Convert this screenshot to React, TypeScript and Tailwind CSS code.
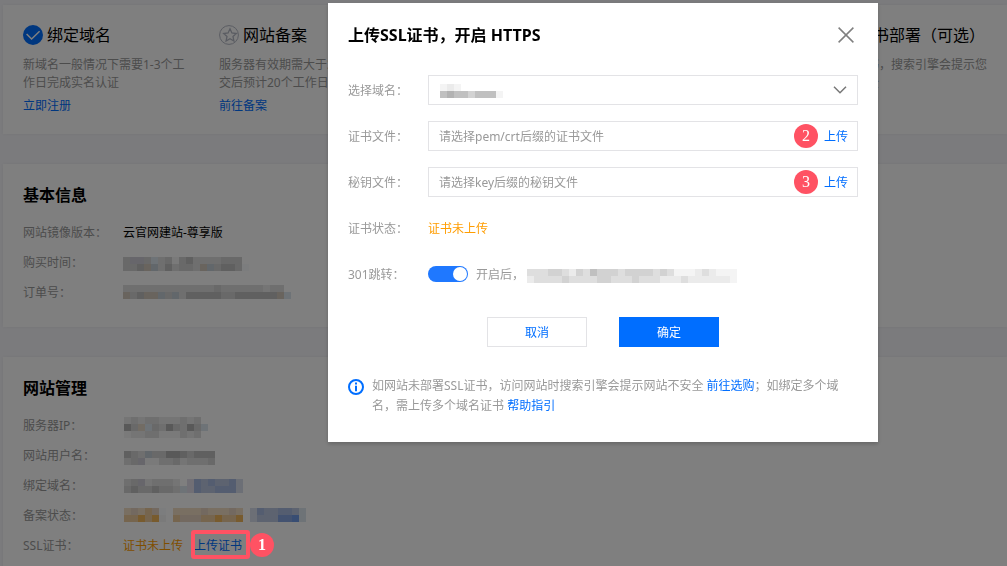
import type { ReactNode } from "react";

const PALETTE: Record<string, string> = {
  z: "#f9fbfc",
  a: "#f4f4f4",
  b: "#ebebeb",
  c: "#dedede",
  d: "#d2d2d2",
  e: "#c0c0c0",
  f: "#b2b2b2",
  t: "#d2c8bc",
  T: "#e4d8c8",
  s: "#c4ced6",
  S: "#dde6ee",
  p: "#cfccd6",
  P: "#e2deea",
  o: "#f2deC4",
  O: "#ecca9c",
  Q: "#f0b65c",
  r: "#e6d2c0",
  u: "#bac6e0",
  U: "#a8bae0",
  V: "#86a4e0",
  w: "#d8deec",
  W: "#709ae6",
};

const CELL = 7;

/* Masked value: rows of square cells, one palette letter per cell. */
function Mosaic({ rows, top, height = 30 }: { rows: string[]; top: number; height?: number }) {
  const columns = Math.max(...rows.map((row) => row.length));
  return (
    <svg width={columns * CELL} height={height} shapeRendering="crispEdges" className="block shrink-0" aria-hidden="true">
      {rows.map((row, y) =>
        row.split("").map((key, x) =>
          PALETTE[key] ? (
            <rect key={`${x}-${y}`} x={x * CELL} y={top + y * CELL} width={CELL} height={CELL} fill={PALETTE[key]} />
          ) : null,
        ),
      )}
    </svg>
  );
}

function Badge({ children }: { children: ReactNode }) {
  return (
    <span className="flex size-6 shrink-0 items-center justify-center rounded-full bg-[#ff5263] font-['Liberation_Serif',serif] text-base leading-6 text-white">
      {children}
    </span>
  );
}

function DoneIcon() {
  return (
    <svg width="20" height="20" viewBox="0 0 20 20" className="shrink-0" aria-hidden="true">
      <circle cx="10" cy="10" r="10" fill="#006eff" />
      <path d="M3.6 9 8.6 14 16.6 6.2" fill="none" stroke="#fff" strokeWidth="1.5" />
    </svg>
  );
}

function StarIcon() {
  return (
    <svg width="20" height="20" viewBox="0 0 20 20" className="shrink-0" fill="none" stroke="#b4b8c4" aria-hidden="true">
      <circle cx="10" cy="10" r="9.4" strokeWidth="1" />
      <path
        d="M11 3.8 12.9 8 17.3 8.5 14 11.5 14.9 16 11 13.8 7.1 16 8 11.5 4.7 8.5 9.1 8Z"
        strokeWidth="1.3"
      />
    </svg>
  );
}

type Step = { title: string; text: string; link?: string; done?: boolean; wide?: boolean };

const STEPS: Step[] = [
  { title: "绑定域名", text: "新域名一般情况下需要1-3个工作日完成实名认证", link: "立即注册", done: true },
  { title: "网站备案", text: "服务器有效期需大于3个月，提交后预计20个工作日", link: "前往备案" },
  { title: "", text: "" },
  { title: "", text: "" },
  { title: "SSL证书部署（可选）", text: "如未部署证书，搜索引擎会提示您的网站不安全", wide: true },
];

function StepItem({ step }: { step: Step }) {
  return (
    <li className={step.wide ? "w-[180px] shrink-0" : "w-[168px] shrink-0"}>
      {step.title && (
        <>
          <h3 className="flex h-5 items-center gap-1 text-base leading-5 whitespace-nowrap">
            {step.done ? <DoneIcon /> : <StarIcon />}
            {step.title}
          </h3>
          <p className="mt-[11px] leading-[18px] text-[#999]">{step.text}</p>
          {step.link && (
            <a href="#" className="mt-1 block leading-5 text-[#006eff]">
              {step.link}
            </a>
          )}
        </>
      )}
    </li>
  );
}

function Card({ title, children }: { title: string; children: ReactNode }) {
  return (
    <section className="bg-white p-5 shadow-[0_0_4px_rgba(0,0,0,0.06)]">
      <h2 className="text-base leading-[22px] font-bold">{title}</h2>
      <dl className="mt-[11px]">{children}</dl>
    </section>
  );
}

function Info({ label, children }: { label: string; children: ReactNode }) {
  return (
    <div className="flex h-[30px] items-center pt-[2px]">
      <dt className="w-[100px] shrink-0 text-[#999]">{label}：</dt>
      <dd className="flex items-center">{children}</dd>
    </div>
  );
}

function Field({ label, htmlFor, children }: { label: string; htmlFor?: string; children: ReactNode }) {
  return (
    <div className="flex h-[30px] items-center">
      <label htmlFor={htmlFor} className="w-20 shrink-0 pt-[2px] text-[#999]">
        {label}：
      </label>
      {children}
    </div>
  );
}

function FileBox({ id, placeholder, step }: { id: string; placeholder: string; step: number }) {
  return (
    <div className="flex h-full flex-1 items-center gap-[6px] border border-[#e3e3e6] px-[9px]">
      <input
        id={id}
        type="text"
        readOnly
        placeholder={placeholder}
        className="h-full min-w-0 flex-1 bg-transparent pl-px outline-none placeholder:text-[#999]"
      />
      <Badge>{step}</Badge>
      <button type="button" className="pt-[2px] text-[#006eff]">
        上传
      </button>
    </div>
  );
}

function UploadDialog() {
  return (
    <div
      role="dialog"
      aria-modal="true"
      aria-labelledby="dialog-title"
      className="w-[550px] bg-white px-5 pt-5 pb-[26px] shadow-[0_2px_4px_rgba(0,0,0,0.2)]"
    >
      <header className="flex h-6 items-center justify-between">
        <h2 id="dialog-title" className="text-base leading-6 font-bold">
          上传SSL证书，开启 HTTPS
        </h2>
        <button type="button" aria-label="关闭" className="mr-1">
          <svg width="16" height="16" viewBox="0 0 16 16" fill="none" stroke="#808080" strokeWidth="1.5" className="block">
            <path d="M.6.6 15.4 15.4M15.4.6.6 15.4" />
          </svg>
        </button>
      </header>

      <form className="mt-7" onSubmit={(event) => event.preventDefault()}>
        <div className="flex flex-col gap-4">
          <Field label="选择域名" htmlFor="domain">
            <div className="relative h-full flex-1">
              <select id="domain" className="block h-full w-full appearance-none border border-[#e3e3e6] bg-white px-[10px] outline-none">
                <option value="" />
              </select>
              <span className="pointer-events-none absolute inset-y-0 left-3">
                <Mosaic rows={["aba", "efeedeeea"]} top={9} />
              </span>
              <svg
                width="14"
                height="8"
                viewBox="0 0 14 8"
                fill="none"
                stroke="#777"
                strokeWidth="1.5"
                className="pointer-events-none absolute top-[11px] right-[11px]"
                aria-hidden="true"
              >
                <path d="M1 .8 7 6.8 13 .8" />
              </svg>
            </div>
          </Field>
          <Field label="证书文件" htmlFor="cert-file">
            <FileBox id="cert-file" placeholder="请选择pem/crt后缀的证书文件" step={2} />
          </Field>
          <Field label="秘钥文件" htmlFor="key-file">
            <FileBox id="key-file" placeholder="请选择key后缀的秘钥文件" step={3} />
          </Field>
          <Field label="证书状态">
            <span className="pt-[2px] text-[#ff9d00]">证书未上传</span>
          </Field>
          <Field label="301跳转" htmlFor="redirect">
            <span className="relative block h-4 w-10 shrink-0">
              <input id="redirect" type="checkbox" defaultChecked className="peer block h-4 w-10 appearance-none rounded-full bg-[#c4c4c4] checked:bg-[#1f78ff]" />
              <span className="pointer-events-none absolute top-px left-px size-[14px] rounded-full bg-white peer-checked:left-[25px]" />
            </span>
            <span className="ml-2 pt-[2px] text-[#999]">开启后，</span>
            <span className="ml-[3px]">
              <Mosaic
                rows={["cccddcbdcedddcddddcdcaaabcbaaa", "bccccdccccddcccdcccbbbcbbbbbba"]}
                top={10}
              />
            </span>
          </Field>
        </div>

        <div className="mt-7 flex justify-center gap-8">
          <button type="button" className="h-[30px] w-[100px] border border-[#e3e3e6] pt-[2px] text-[#006eff]">
            取消
          </button>
          <button type="submit" className="h-[30px] w-[100px] bg-[#006eff] pt-[2px] text-white">
            确定
          </button>
        </div>
      </form>

      <div className="mt-[29px] flex gap-2">
        <svg width="16" height="16" viewBox="0 0 16 16" className="mt-[3px] shrink-0" fill="none" aria-hidden="true">
          <circle cx="8" cy="8" r="7" stroke="#006eff" strokeWidth="2" />
          <path d="M8 3.6V5.4M8 6.7V12.2" stroke="#006eff" strokeWidth="2" />
        </svg>
        <p className="flex-1 pr-3 leading-5 text-[#999]">
          如网站未部署SSL证书，访问网站时搜索引擎会提示网站不安全{" "}
          <a href="#" className="text-[#006eff]">
            前往选购
          </a>
          ；如绑定多个域名，需上传多个域名证书{" "}
          <a href="#" className="text-[#006eff]">
            帮助指引
          </a>
        </p>
      </div>
    </div>
  );
}

export default function App() {
  return (
    <div
      lang="zh-CN"
      className="h-screen overflow-hidden bg-[#f7f7fb] font-['Noto_Sans','Noto_Sans_CJK_SC',sans-serif] text-xs leading-5 text-black"
    >
      <main className="flex flex-col gap-[30px] pt-[5px] pl-[3px]">
        <section className="overflow-hidden bg-white p-5 shadow-[0_0_4px_rgba(0,0,0,0.06)]">
          <ol className="flex h-[89px] gap-7">
            {STEPS.map((step, index) => (
              <StepItem key={index} step={step} />
            ))}
          </ol>
        </section>

        <Card title="基本信息">
          <Info label="网站镜像版本">云官网建站-尊享版</Info>
          <Info label="购买时间">
            <Mosaic rows={["dppdScdadeccccddd", "ddetscecddctsdeedz"]} top={9} />
          </Info>
          <Info label="订单号">
            <Mosaic rows={["cccccccccccccdccccccbcc", "tdettsdsceeeeeddeeeeeetS"]} top={7} />
          </Info>
        </Card>

        <Card title="网站管理">
          <Info label="服务器IP">
            <span className="ml-px">
              <Mosaic rows={["bcbccbbbcbc", "fdTSdcfdcfdS", "abbccaaacbc"]} top={6} />
            </span>
          </Info>
          <Info label="网站用户名">
            <span className="ml-px">
              <Mosaic rows={["edcsddffedeee", "cdpaaccdbcccd"]} top={10} />
            </span>
          </Info>
          <Info label="绑定域名">
            <span className="ml-px">
              <Mosaic rows={["cdpbcccb PUuUuuUw", "deddeddcSPUuuUUUw"]} top={8} />
            </span>
          </Info>
          <Info label="备案状态">
            <span className="ml-px">
              <Mosaic rows={["oroOrz ooooroooro wUuuUUuS", "OOQOQa OrrrOOQOOQ wuuuVVWS"]} top={7} />
            </span>
          </Info>
          <Info label="SSL证书">
            <span className="text-[#ff9d00]">证书未上传</span>
            <span className="relative ml-[11px]">
              <a href="#" className="text-[#006eff]">
                上传证书
              </a>
              <span className="pointer-events-none absolute -top-[6px] -left-[3px] z-20 flex items-center font-bold">
                <span className="h-[29px] w-[59px] rounded-[3px] border-4 border-[#ff5263]" />
                <Badge>1</Badge>
              </span>
            </span>
          </Info>
        </Card>
      </main>

      <div className="fixed inset-0 z-10 flex items-start justify-center bg-black/50 pt-[3px] pl-[199px]">
        <UploadDialog />
      </div>
    </div>
  );
}
